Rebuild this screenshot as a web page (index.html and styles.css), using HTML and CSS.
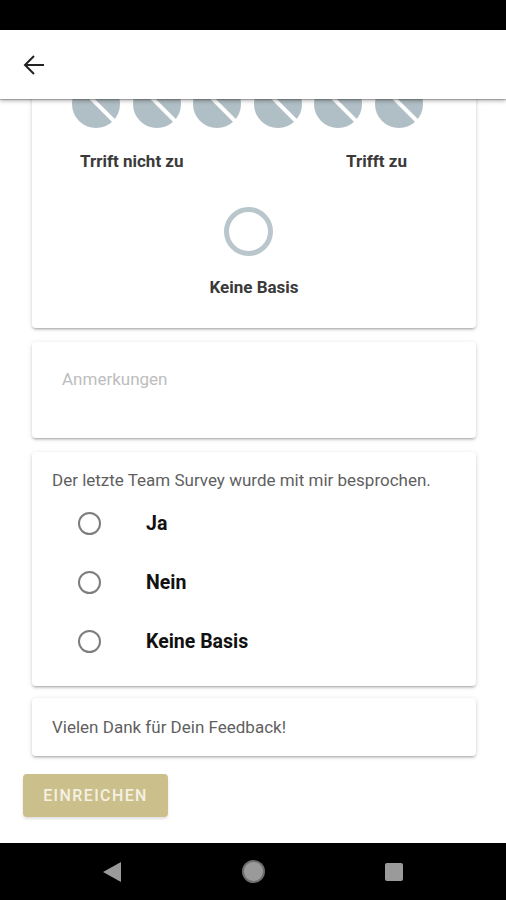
FILE: index.html
```html
<!DOCTYPE html>
<html lang="de">
<head>
<meta charset="utf-8">
<title>Team Survey</title>
<link rel="stylesheet" href="styles.css">
</head>
<body>
<div class="screen">
  <div class="statusbar"></div>
  <header class="appbar">
    <svg class="back" width="22" height="22" viewBox="0 0 22 22"><path d="M21 11H2.5M11 2L2 11l9 9" fill="none" stroke="#222" stroke-width="2"/></svg>
  </header>
  <main class="content">
    <section class="card scale-card">
      <div class="scale">
        <svg class="dot" viewBox="0 0 48 48"><circle cx="24" cy="24" r="24" fill="#b0bec5"/><line x1="4" y1="3" x2="46" y2="45" stroke="#fff" stroke-width="4"/></svg>
        <svg class="dot" viewBox="0 0 48 48"><circle cx="24" cy="24" r="24" fill="#b0bec5"/><line x1="4" y1="3" x2="46" y2="45" stroke="#fff" stroke-width="4"/></svg>
        <svg class="dot" viewBox="0 0 48 48"><circle cx="24" cy="24" r="24" fill="#b0bec5"/><line x1="4" y1="3" x2="46" y2="45" stroke="#fff" stroke-width="4"/></svg>
        <svg class="dot" viewBox="0 0 48 48"><circle cx="24" cy="24" r="24" fill="#b0bec5"/><line x1="4" y1="3" x2="46" y2="45" stroke="#fff" stroke-width="4"/></svg>
        <svg class="dot" viewBox="0 0 48 48"><circle cx="24" cy="24" r="24" fill="#b0bec5"/><line x1="4" y1="3" x2="46" y2="45" stroke="#fff" stroke-width="4"/></svg>
        <svg class="dot" viewBox="0 0 48 48"><circle cx="24" cy="24" r="24" fill="#b0bec5"/><line x1="4" y1="3" x2="46" y2="45" stroke="#fff" stroke-width="4"/></svg>
      </div>
      <div class="scale-labels">
        <span class="lbl-left">Trrift nicht zu</span>
        <span class="lbl-right">Trifft zu</span>
      </div>
      <div class="nobasis">
        <span class="ring"></span>
        <span class="nobasis-label">Keine Basis</span>
      </div>
    </section>

    <section class="card note-card">
      <span class="placeholder">Anmerkungen</span>
    </section>

    <section class="card question-card">
      <p class="question">Der letzte Team Survey wurde mit mir besprochen.</p>
      <div class="option"><span class="radio"></span><span class="opt-label">Ja</span></div>
      <div class="option"><span class="radio"></span><span class="opt-label">Nein</span></div>
      <div class="option"><span class="radio"></span><span class="opt-label">Keine Basis</span></div>
    </section>

    <section class="card thanks-card">
      <span class="thanks">Vielen Dank für Dein Feedback!</span>
    </section>

    <button class="submit">EINREICHEN</button>
  </main>
  <nav class="navbar">
    <span class="nav-back"></span>
    <span class="nav-home"></span>
    <span class="nav-recent"></span>
  </nav>
</div>
</body>
</html>
```

FILE: styles.css
```css
* { box-sizing: border-box; }
html, body { margin: 0; padding: 0; background: #fff; }
body { font-family: Roboto, "Noto Sans", "Liberation Sans", sans-serif; }

.screen {
  width: 506px;
  height: 900px;
  display: flex;
  flex-direction: column;
  overflow: hidden;
}

.statusbar {
  height: 30px;
  background: #000;
  flex: none;
}

.appbar {
  height: 69px;
  flex: none;
  background: #fff;
  position: relative;
  z-index: 2;
  box-shadow: 0 2px 4px rgba(0,0,0,0.28), 0 1px 1px rgba(0,0,0,0.2);
  display: flex;
  align-items: center;
  padding-left: 23px;
}
.back { display: block; }

.content {
  flex: 1;
  overflow: hidden;
  display: flex;
  flex-direction: column;
  align-items: flex-start;
}

.card {
  background: #fff;
  border-radius: 4px;
  margin-left: 32px;
  width: 444px;
  box-shadow: 0 2px 2px rgba(0,0,0,0.12), 0 3px 1px -2px rgba(0,0,0,0.1), 0 1px 5px rgba(0,0,0,0.14);
}

.scale-card {
  margin-top: -35px;
  padding: 16px 0 30px 40px;
}
.scale {
  width: 351px;
  display: flex;
  justify-content: space-between;
}
.dot { width: 48px; height: 48px; display: block; }

.scale-labels {
  margin-top: 22px;
  height: 22px;
  line-height: 22px;
  font-size: 17px;
  font-weight: 700;
  color: #3a3a3a;
  width: 335px;
  display: flex;
  justify-content: space-between;
  padding-left: 8px;
}

.nobasis {
  display: flex;
  flex-direction: column;
  align-items: center;
  width: 364px;
  margin-top: 35px;
}
.ring {
  width: 49px;
  height: 49px;
  border-radius: 50%;
  border: 5px solid #b9c6cc;
  margin-left: -12px;
}
.nobasis-label {
  margin-top: 20px;
  line-height: 22px;
  font-size: 17px;
  font-weight: 700;
  color: #3a3a3a;
}

.note-card {
  margin-top: 14px;
  height: 96px;
  padding: 26px 30px 0;
}
.placeholder {
  font-size: 17px;
  line-height: 22px;
  color: #bdbdbd;
}

.question-card {
  margin-top: 14px;
  padding: 17px 20px 15px;
}
.question {
  margin: 0 0 3px;
  font-size: 17px;
  line-height: 22px;
  color: #5f5f5f;
}
.option {
  height: 59px;
  display: flex;
  align-items: center;
}
.radio {
  width: 23px;
  height: 23px;
  border-radius: 50%;
  border: 2px solid #7d7d7d;
  margin-left: 26px;
  flex: none;
}
.opt-label {
  margin-left: 45px;
  font-size: 19.5px;
  font-weight: 700;
  color: #111;
}

.thanks-card {
  margin-top: 12px;
  padding: 18px 20px;
}
.thanks {
  display: block;
  font-size: 17px;
  line-height: 22px;
  color: #5f5f5f;
}

.submit {
  margin: 18px 0 0 23px;
  width: 145px;
  height: 43px;
  border: none;
  border-radius: 4px;
  background: #cbbf8b;
  color: #f5f1e3;
  font-family: Roboto, "Liberation Sans", sans-serif;
  font-size: 16px;
  font-weight: 500;
  letter-spacing: 1.4px;
  padding: 0;
  box-shadow: 0 2px 3px rgba(0,0,0,0.12);
}

.navbar {
  height: 57px;
  flex: none;
  background: #000;
  position: relative;
  z-index: 2;
  display: flex;
  align-items: center;
}
.nav-back {
  width: 0; height: 0;
  border-top: 10px solid transparent;
  border-bottom: 10px solid transparent;
  border-right: 18px solid #9a9a9a;
  margin-left: 103px;
}
.nav-home {
  width: 23px; height: 23px;
  border-radius: 50%;
  background: #9a9a9a;
  border: 2px solid #6e6e6e;
  margin-left: 121px;
}
.nav-recent {
  width: 18px; height: 18px;
  border-radius: 2px;
  background: #9a9a9a;
  margin-left: 120px;
}
```
